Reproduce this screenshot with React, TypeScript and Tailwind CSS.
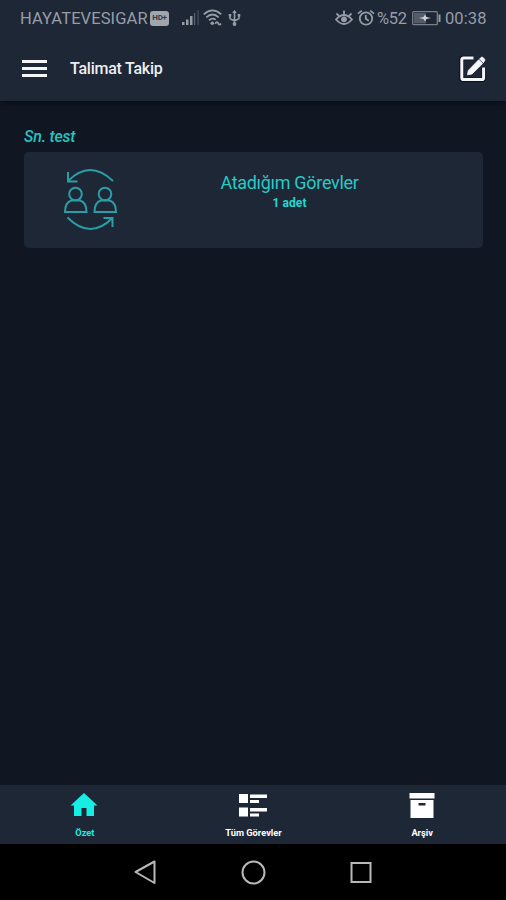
import type { ReactNode } from "react";

function StatusBar() {
  return (
    <div className="flex h-[37px] items-center pl-[20px] pr-[17px] text-[16.5px] leading-none text-[#969da7]">
      <span className="w-[130px] pt-px whitespace-nowrap tracking-[0.1px]">HAYATEVESIGAR</span>
      <span className="mb-px flex h-[15px] w-[19px] items-center justify-center rounded-[3px] bg-[#a0a5ae] text-[8px] font-bold tracking-[-0.3px] text-[#343d4b]">
        HD+
      </span>
      <svg className="mb-px ml-[13px]" width="18" height="18" viewBox="0 0 18 18" fill="currentColor">
        <rect x="0" y="13" width="2.5" height="3" />
        <rect x="4" y="10.5" width="2.5" height="5.5" />
        <rect x="8" y="7" width="2.5" height="9" />
        <rect x="12" y="4" width="1.2" height="12" opacity=".5" />
        <rect x="15.5" y="1" width="1.2" height="15" opacity=".35" />
      </svg>
      <svg className="mb-px ml-[3px]" width="19" height="18" viewBox="0 0 19 18" fill="none" stroke="currentColor" strokeWidth="1.8">
        <path d="M.8 5.3Q9.5-2.5 18.2 5.3M3.3 8.3Q9.5 2.7 15.7 8.3M6 11.3q3.5-3 6.6-.6" />
        <circle cx="9.3" cy="14.2" r="1.8" fill="currentColor" stroke="none" />
        <path d="M12.2 14.8q1.9-3 3-.5t2.8.1" />
      </svg>
      <svg className="mb-px ml-[6px]" width="13" height="18" viewBox="0 0 13 18" fill="none" stroke="currentColor" strokeWidth="1.6">
        <path d="M6.5 3v12M2 6.5V9q0 1 1 1.3l3.5 1.5L10 10.3q1-.3 1-1.3V6.5" />
        <path d="m6.5.7 2.3 3.3H4.2zM.7 5h2.6v2.5H.7zM9.7 5h2.6v2.5H9.7z" fill="currentColor" stroke="none" />
        <circle cx="6.5" cy="15" r="1.9" fill="currentColor" stroke="none" />
      </svg>

      <div className="ml-auto flex items-center">
        <svg className="mb-px" width="18" height="18" viewBox="0 0 18 18" fill="none" stroke="currentColor" strokeWidth="1.8">
          <path d="M1 10.5q8-9 16 0-8 9-16 0z" />
          <path d="m1.5 4.5 2.7 2.7M9 1.5v4M16.5 4.5l-2.7 2.7" />
          <circle cx="9" cy="10.3" r="2.9" fill="currentColor" stroke="none" />
        </svg>
        <svg className="mb-px ml-[4px]" width="18" height="18" viewBox="0 0 18 18" fill="none" stroke="currentColor" strokeWidth="1.8">
          <circle cx="9" cy="9.5" r="6.2" />
          <path d="M8.8 6v3.8l3 2M1 4.6l3.8-3M17 4.6l-3.8-3" />
        </svg>
        <span className="ml-[2px] w-[31px] pt-px whitespace-nowrap tracking-[-0.3px]">%52</span>
        <svg className="mb-px ml-[4px]" width="29" height="16" viewBox="0 0 29 16" fill="none" stroke="currentColor">
          <rect x=".7" y="1.7" width="24.6" height="13" rx="1" strokeWidth="1.3" opacity=".75" />
          <rect x="2" y="3" width="12" height="10.4" fill="currentColor" stroke="none" opacity=".45" />
          <path d="M27.5 4.5V12" strokeWidth="2" />
          <path d="m7 8 4.500-1 1.500-2.500 1.500 2.500 4.500 1-4.500 1-1.500 2.500L11.500 9z" fill="#cbd0d7" stroke="none" />
        </svg>
        <span className="ml-[4px] w-[44px] pt-px whitespace-nowrap tracking-[0.1px]">00:38</span>
      </div>
    </div>
  );
}

function AppBar() {
  return (
    <div className="flex h-[64px] items-center pl-[22px] pr-[19px]">
      <button className="mb-[2px] flex w-[25px] flex-col gap-[4px]" aria-label="Menu">
        <span className="h-[3px] bg-[#f4f5f6]" />
        <span className="h-[3px] bg-[#f4f5f6]" />
        <span className="h-[3px] bg-[#f4f5f6]" />
      </button>
      <h1 className="ml-[23px] text-[16px] leading-none font-medium tracking-[-0.25px] text-[#eceef0]">Talimat Takip</h1>
      <svg className="ml-auto" width="28" height="28" viewBox="0 0 28 28" fill="none">
        <path d="M14.5 3H4Q2.5 3 2.5 4.5V23q0 1.7 1.6 1.7h19q1.7 0 1.7-1.7V12.5" stroke="#0b0f1c" strokeWidth="4.5" />
        <path d="M14.5 3h-10Q2.800 3 2.800 4.800v17.900q0 1.900 1.900 1.900h18q1.900 0 1.900-1.900V12.500" stroke="#f5f6f7" strokeWidth="3" />
        <path d="m8.500 19.800.8-4.300L19.700 4.800l3.900 3.800L13 19zM20.500 4l1.600-1.600q1-.8 2 .2l1.300 1.300q1 1 .1 2l-1.200 1.900z" fill="#f5f6f7" stroke="#f5f6f7" strokeWidth=".8" strokeLinejoin="round" />
      </svg>
    </div>
  );
}

function AssignedIcon() {
  return (
    <svg width="56" height="64" viewBox="0 0 56 64" fill="none" stroke="#2b9da6" strokeWidth="2">
      <path d="M6 13Q28-9 51 13M6 4v9.500h9.500" />
      <circle cx="13.500" cy="26" r="6.300" />
      <path d="M9.500 32.500Q3 34.500 3 44h21.500q0-9.500-6.500-11.500z" />
      <circle cx="43" cy="26" r="6.300" />
      <path d="M39 32.500Q32.500 34.500 32.500 44H54q0-9.500-6.500-11.500z" />
      <path d="M5.500 49.500q22.500 22.500 44.500 1M41.500 50h9v9" />
    </svg>
  );
}

function Tab({ label, active, children }: { label: string; active?: boolean; children: ReactNode }) {
  return (
    <button className={`flex flex-1 flex-col items-center pt-[6px] ${active ? "text-[#16eee4]" : "text-white"}`}>
      <svg width="30" height="28" viewBox="0 0 30 28" fill="currentColor">
        {children}
      </svg>
      <span className="mt-[8px] ml-px text-[9.3px] leading-[11px] font-bold whitespace-nowrap">{label}</span>
    </button>
  );
}

export default function App() {
  return (
    <div className="flex h-[900px] w-[506px] flex-col overflow-hidden bg-[#101722] font-['Roboto','Noto_Sans',sans-serif]">
      <header className="h-[101px] shrink-0 bg-[#1e2736] shadow-[0_2px_5px_#070d18]">
        <StatusBar />
        <AppBar />
      </header>

      <main className="flex-1 px-6 pt-[27px]">
        <p className="text-[16px] leading-[18px] font-medium tracking-[-0.2px] text-[#25c4c1] italic">Sn. test</p>
        <section className="mt-[6px] flex h-[96px] w-[459px] rounded-[5px] bg-[#1e2736]">
          <div className="w-[132px] pt-[16px] pl-[38px]">
            <AssignedIcon />
          </div>
          <div className="w-[267px] pt-[20px] text-center">
            <h2 className="text-[18px] leading-[21px] tracking-[-0.3px] text-[#28c9c7]">Atadığım Görevler</h2>
            <p className="mt-[3px] text-[12px] leading-[14px] font-bold tracking-[0.1px] text-[#20d9d4]">1 adet</p>
          </div>
        </section>
      </main>

      <nav className="flex h-[59px] shrink-0 bg-[#1e2736]">
        <Tab label="Özet" active>
          <path d="M15 2 28.500 14.500H25V25h-7.500v-8h-5v8H5V14.500H1.500z" />
        </Tab>
        <Tab label="Tüm Görevler">
          <path d="M1 3h9v9H1zM1 16.500h9v9H1zM12 3.500h17V7H12zM12 9h9v3h-9zM12 17h17v3.500H12zM12 22.500h9v3h-9z" />
        </Tab>
        <Tab label="Arşiv">
          <path d="M2.500 2h25v5.500h-25zM3.500 9h23v18h-23z" />
          <path d="M11.500 12h7v2.500h-7z" fill="#1e2736" />
        </Tab>
      </nav>

      <footer className="flex h-14 shrink-0 items-center justify-center gap-[82px] bg-black">
        <svg width="26" height="26" viewBox="0 0 26 26" fill="none" stroke="#b8b8b8" strokeWidth="2">
          <path d="M22.500 2.500V24l-19-11z" strokeLinejoin="round" />
        </svg>
        <svg width="26" height="26" viewBox="0 0 26 26" fill="none" stroke="#b8b8b8" strokeWidth="2">
          <circle cx="13.500" cy="13.500" r="11" />
        </svg>
        <svg width="26" height="26" viewBox="0 0 26 26" fill="none" stroke="#b8b8b8" strokeWidth="2">
          <rect x="3.500" y="4" width="19" height="19" />
        </svg>
      </footer>
    </div>
  );
}
